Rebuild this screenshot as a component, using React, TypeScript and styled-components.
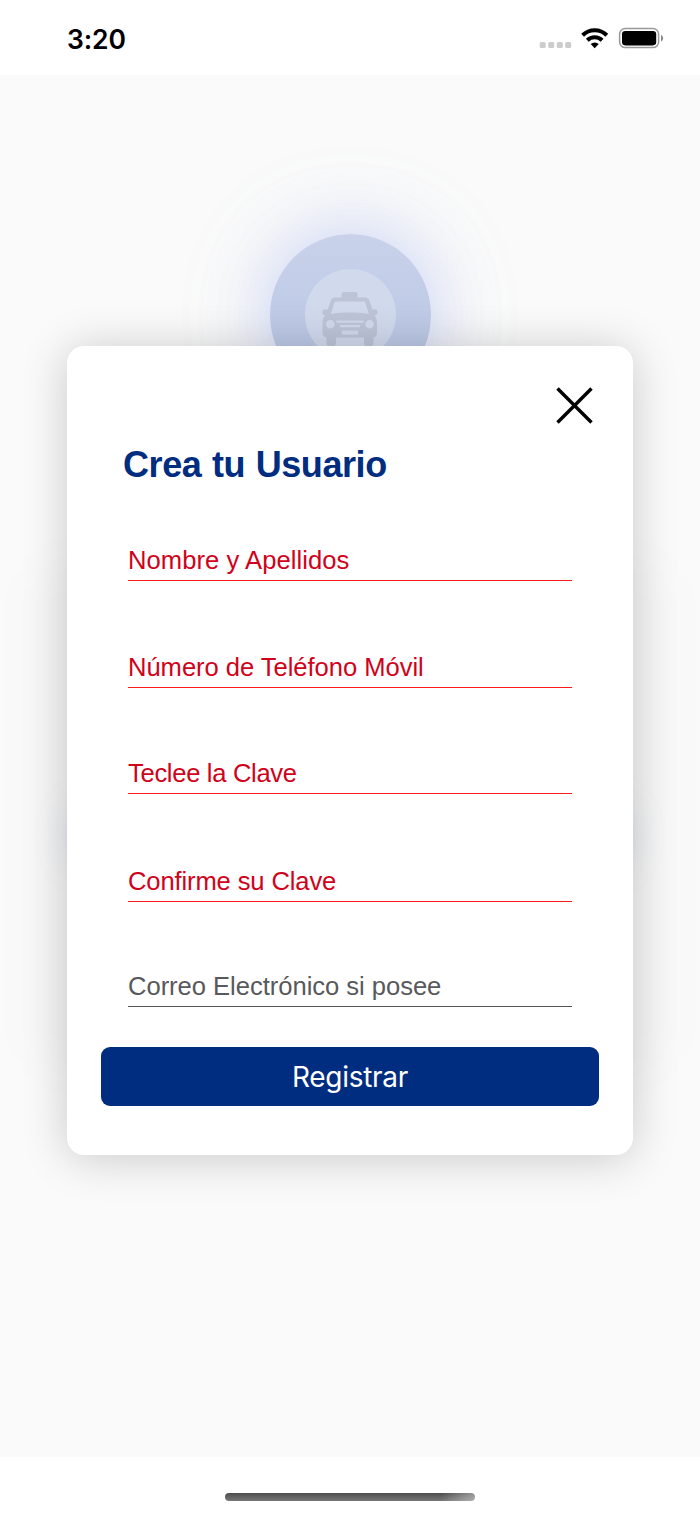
import React from "react";
import styled, { createGlobalStyle } from "styled-components";

const GlobalStyle = createGlobalStyle`
  * { box-sizing: border-box; }
  body { margin: 0; background: #fff; }
`;

const Screen = styled.div`
  width: 700px;
  height: 1515px;
  display: flex;
  flex-direction: column;
  background: #fff;
  overflow: hidden;
  font-family: "Liberation Sans", Helvetica, Arial, sans-serif;
`;

const StatusBar = styled.header`
  flex: none;
  height: 75px;
  padding: 0 36px 0 67px;
  display: flex;
  align-items: flex-start;
  justify-content: space-between;
`;

const Clock = styled.time`
  margin-top: 22.5px;
  font: 600 26.5px/32px Inter, sans-serif;
  letter-spacing: -0.1px;
  color: #000;
`;

const StatusIcons = styled.svg`
  width: 126px;
  height: 30px;
  margin-top: 23px;
`;

const Main = styled.main`
  position: relative;
  flex: 1;
  background: #fafafa;
  overflow: hidden;
  padding-top: 271px;
`;

const CardShade = styled.div`
  position: absolute;
  left: 35px;
  top: 486px;
  width: 630px;
  height: 510px;
  border-radius: 40px;
  background: rgba(0, 0, 0, 0.018);
  filter: blur(24px);
`;

const ButtonShade = styled.div`
  position: absolute;
  left: 62px;
  top: 720px;
  width: 576px;
  height: 80px;
  border-radius: 40px;
  background: rgba(90, 115, 190, 0.1);
  filter: blur(16px);
`;

const Logo = styled.div`
  position: absolute;
  left: 269.5px;
  top: 159px;
  width: 161.5px;
  height: 161.5px;
  border-radius: 50%;
  background: linear-gradient(180deg, #c9d2ea, #bdc9e6 60%, #b9c8e4);
  box-shadow: 0 0 68px rgba(140, 160, 240, 0.42), 0 0 110px rgba(150, 180, 220, 0.14);
  display: flex;
  align-items: center;
  justify-content: center;
`;

const LogoDisc = styled.div`
  width: 91px;
  height: 91px;
  border-radius: 50%;
  background: #d1d9ed;
`;

const TaxiIcon = styled.svg`
  display: block;
  width: 56px;
  height: 55px;
  margin: 23px 0 0 17.5px;
`;

const Dialog = styled.section`
  position: relative;
  width: 566px;
  height: 809px;
  margin: 0 auto 0 67px;
  padding: 41px 34px 0;
  border-radius: 17px;
  background: #fff;
  box-shadow: 0 3px 46px rgba(0, 0, 0, 0.2);
  display: flex;
  flex-direction: column;
`;

const CloseButton = styled.button`
  align-self: flex-end;
  width: 37px;
  height: 37px;
  margin-right: 6px;
  padding: 0;
  border: 0;
  background: none;

  svg { display: block; }
`;

const Title = styled.h1`
  margin: 19px 0 0 22px;
  font-size: 36px;
  line-height: 44px;
  font-weight: 700;
  letter-spacing: -0.42px;
  word-spacing: 1px;
  color: #002d80;
`;

const Fields = styled.div`
  display: flex;
  flex-direction: column;
  margin: 59px 27px 0;
`;

const Field = styled.div<{ $optional?: boolean; $height: number; $tracking: number }>`
  height: ${(p) => p.$height}px;
  display: flex;
  flex-direction: column;
  justify-content: flex-end;
  border-bottom: 1px solid ${(p) => (p.$optional ? "#555" : "#ff1a1a")};
  color: ${(p) => (p.$optional ? "#58595b" : "#d0021b")};
  font-size: 25.6px;
  line-height: 30px;
  letter-spacing: ${(p) => p.$tracking}px;
  padding-bottom: 5px;
  white-space: nowrap;
`;

const Submit = styled.button`
  height: 59px;
  margin-top: 40px;
  padding: 1px 0 0;
  border: 0;
  border-radius: 9px;
  background: #002d80;
  color: #fff;
  font: 400 28px/59px Inter, sans-serif;
  letter-spacing: -0.3px;
`;

const Footer = styled.footer`
  flex: none;
  height: 58px;
  display: flex;
  justify-content: center;
  padding-top: 35.5px;
`;

const HomeIndicator = styled.div`
  width: 250px;
  height: 8.5px;
  border-radius: 5px;
  background: linear-gradient(100deg, transparent 86%, rgba(255, 255, 255, 0.42) 100%),
    linear-gradient(180deg, #4c4c4c, #777);
`;

const fields = [
  { label: "Nombre y Apellidos", height: 35, tracking: 0.05 },
  { label: "Número de Teléfono Móvil", height: 107, tracking: -0.05 },
  { label: "Teclee la Clave", height: 106, tracking: -0.32 },
  { label: "Confirme su Clave", height: 108, tracking: -0.14 },
  { label: "Correo Electrónico si posee", height: 105, tracking: -0.04, optional: true },
];

export default function App() {
  return (
    <>
      <GlobalStyle />
      <Screen>
        <StatusBar>
          <Clock>3:20</Clock>
          <StatusIcons viewBox="538 23 126 30" aria-hidden="true">
            <g fill="#ccc">
              <rect x="539.7" y="42" width="6" height="6" rx="1.6" />
              <rect x="548.2" y="42" width="6" height="6" rx="1.6" />
              <rect x="556.8" y="42" width="6" height="6" rx="1.6" />
              <rect x="565.2" y="42" width="6" height="6" rx="1.6" />
            </g>
            <g fill="none" stroke="#000" strokeWidth="4.1">
              <path d="M582.6 35.2a17.2 17.2 0 0 1 24.2 0" />
              <path d="M587.3 40.3a10.6 10.6 0 0 1 14.8 0" />
            </g>
            <path d="M594.7 48.2l-4-4.1a5.7 5.7 0 0 1 8 0z" fill="#000" />
            <rect x="619.6" y="28.6" width="39" height="19" rx="5.6" fill="none" stroke="#999" strokeWidth="1.5" />
            <rect x="622" y="31" width="34.2" height="14.4" rx="3.3" fill="#000" />
            <path d="M661 35v6.4c1.3-.5 2.1-1.8 2.1-3.2s-.8-2.7-2.1-3.2z" fill="#888" />
          </StatusIcons>
        </StatusBar>

        <Main>
          <CardShade />
          <ButtonShade />
          <Logo>
            <LogoDisc>
              <TaxiIcon viewBox="0 0 56 55" aria-hidden="true">
                <path
                  fill="#bdc4d7"
                  fillRule="evenodd"
                  d="M21.5 0h12a2 2 0 0 1 2 2v3.5h8a4 4 0 0 1 3.8 2.8l3.2 9.2h3.3a1.7 1.7 0 0 1 1.7 1.7v2.1a1.7 1.7 0 0 1-1.7 1.7h-1.5c1.9 2.3 2.7 4.9 2.7 8v10a5 5 0 0 1-3.5 4.7V51a3 3 0 0 1-3 3h-3.5a3 3 0 0 1-3-3v-5.5H14V51a3 3 0 0 1-3 3H7.5a3 3 0 0 1-3-3v-5.3A5 5 0 0 1 .5 41V31c0-3.1.8-5.7 2.7-8H2.2A1.7 1.7 0 0 1 .5 21.3v-2.1a1.7 1.7 0 0 1 1.7-1.7h3.6L9 8.3a4 4 0 0 1 3.8-2.8h6.7V2a2 2 0 0 1 2-2z
                  M14 9.5a1.5 1.5 0 0 0-1.5 1L8.8 21.8c12-1.6 26-1.6 38 0L43.2 10.5a1.5 1.5 0 0 0-1.5-1z
                  M8.3 28a4.3 4.3 0 1 0 0 8.6 4.3 4.3 0 0 0 0-8.6z
                  M47.6 28a4.3 4.3 0 1 0 0 8.6 4.3 4.3 0 0 0 0-8.6z
                  M15.2 28.5a1 1 0 0 0 0 2.2h25.6a1 1 0 0 0 0-2.2z
                  M18.7 33a1 1 0 0 0 0 2.2h18.4a1 1 0 0 0 0-2.2z
                  M20.5 38.6a.8.8 0 0 0-.8.8V42a.8.8 0 0 0 .8.8h15a.8.8 0 0 0 .8-.8v-2.6a.8.8 0 0 0-.8-.8z"
                />
              </TaxiIcon>
            </LogoDisc>
          </Logo>

          <Dialog role="dialog" aria-label="Crea tu Usuario">
            <CloseButton aria-label="Cerrar">
              <svg width="37" height="37" viewBox="0 0 37 37">
                <path d="M1.5 1.5l34 34M35.500 1.500l-34 34" stroke="#000" strokeWidth="3.4" fill="none" />
              </svg>
            </CloseButton>
            <Title>Crea tu Usuario</Title>
            <Fields>
              {fields.map((f) => (
                <Field key={f.label} $height={f.height} $tracking={f.tracking} $optional={f.optional}>
                  {f.label}
                </Field>
              ))}
            </Fields>
            <Submit>Registrar</Submit>
          </Dialog>
        </Main>

        <Footer>
          <HomeIndicator />
        </Footer>
      </Screen>
    </>
  );
}
